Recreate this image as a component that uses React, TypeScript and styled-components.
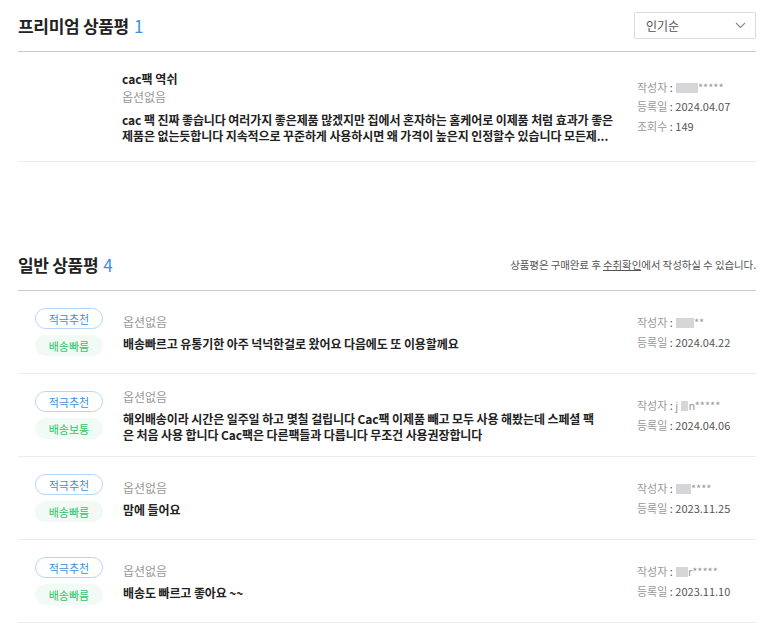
import React from "react";
import styled, { createGlobalStyle } from "styled-components";

const Global = createGlobalStyle`
  html, body { margin: 0; padding: 0; background: #fff; }
  body { font-family: "Noto Sans CJK KR", "Noto Sans", sans-serif; color: #222; }
  * { box-sizing: border-box; }
`;

const Page = styled.div`
  width: 773px;
  padding: 0 17px 0 18px;
`;

const SectionHead = styled.div`
  display: flex;
  align-items: center;
  justify-content: space-between;
  height: 52px;
  border-bottom: 1px solid #c9c9cf;
`;

const Title = styled.h2`
  margin: 0;
  font-size: 17px;
  font-weight: 700;
  color: #222;
  letter-spacing: -0.3px;
  span { color: #3d8fe0; font-weight: 400; margin-left: 5px; }
`;

const SelectBox = styled.div`
  width: 122px;
  height: 27px;
  border: 1px solid #dcdcdc;
  border-radius: 2px;
  display: flex;
  align-items: center;
  justify-content: space-between;
  padding: 0 9px 0 11px;
  font-size: 12px;
  color: #555;
`;

const Note = styled.div`
  font-size: 10.5px;
  color: #555;
  letter-spacing: -0.1px;
  a { color: #555; text-decoration: underline; }
`;

const PremiumItem = styled.div`
  display: flex;
  align-items: center;
  height: 110px;
  border-bottom: 1px solid #ececec;
`;

const Thumb = styled.div`
  width: 104px;
  flex-shrink: 0;
`;

const Body = styled.div`
  flex: 1;
  min-width: 0;
  display: flex;
  flex-direction: column;
`;

const ItemTitle = styled.div`
  font-size: 12px;
  font-weight: 600;
  line-height: 18px;
  color: #222;
`;

const Option = styled.div`
  font-size: 12px;
  line-height: 18px;
  color: #999;
`;

const Text = styled.div<{ $mt: number }>`
  font-size: 12px;
  font-weight: 600;
  line-height: 16px;
  color: #222;
  margin-top: ${(p) => p.$mt}px;
  letter-spacing: -0.1px;
`;

const Meta = styled.div`
  width: 119px;
  flex-shrink: 0;
  display: flex;
  flex-direction: column;
  gap: 3px;
  font-size: 11px;
  line-height: 16.5px;
  color: #999;
  margin-left: 22px;
  b { font-weight: 400; color: #555; }
`;

const Blur = styled.i<{ $w: number }>`
  display: inline-block;
  width: ${(p) => p.$w}px;
  height: 10px;
  background: #d6d6d8;
  vertical-align: -1px;
  margin-left: 3px;
`;

const Row = styled.div`
  display: flex;
  align-items: center;
  height: 83px;
  padding-left: 17px;
  border-bottom: 1px solid #ececec;
`;

const Badges = styled.div`
  width: 68px;
  flex-shrink: 0;
  margin-right: 20px;
  display: flex;
  flex-direction: column;
  gap: 6px;
`;

const Badge = styled.div<{ $kind: "blue" | "green" }>`
  height: 21px;
  border-radius: 11px;
  display: flex;
  align-items: center;
  justify-content: center;
  font-size: 11px;
  ${(p) =>
    p.$kind === "blue"
      ? `border: 1px solid #b6d6f5; color: #3d8fe0; background: #fff;`
      : `background: #f1faf4; color: #2fc46b;`}
`;

const Spacer = styled.div`
  height: 77px;
`;

const Chevron = () => (
  <svg width="11" height="7" viewBox="0 0 11 7" fill="none">
    <path d="M1 1l4.5 4.5L10 1" stroke="#888" strokeWidth="1.1" />
  </svg>
);

type Review = {
  badge2: string;
  lines: string[];
  user: React.ReactNode;
  date: string;
};

const reviews: Review[] = [
  {
    badge2: "배송빠름",
    lines: ["배송빠르고 유통기한 아주 넉넉한걸로 왔어요 다음에도 또 이용할께요"],
    user: (
      <>
        <Blur $w={18} />**
      </>
    ),
    date: "2024.04.22",
  },
  {
    badge2: "배송보통",
    lines: [
      "해외배송이라 시간은 일주일 하고 몇칠 걸립니다 Cac팩 이제품 빼고 모두 사용 해봤는데 스페셜 팩",
      "은 처음 사용 합니다 Cac팩은 다른팩들과 다릅니다 무조건 사용권장합니다",
    ],
    user: (
      <>
        {" "}j<Blur $w={7} />n*****
      </>
    ),
    date: "2024.04.06",
  },
  {
    badge2: "배송빠름",
    lines: ["맘에 들어요"],
    user: (
      <>
        <Blur $w={15} />****
      </>
    ),
    date: "2023.11.25",
  },
  {
    badge2: "배송빠름",
    lines: ["배송도 빠르고 좋아요 ~~"],
    user: (
      <>
        <Blur $w={12} />r*****
      </>
    ),
    date: "2023.11.10",
  },
];

export default function App() {
  return (
    <Page>
      <Global />
      <SectionHead>
        <Title>
          프리미엄 상품평<span>1</span>
        </Title>
        <SelectBox>
          인기순
          <Chevron />
        </SelectBox>
      </SectionHead>
      <PremiumItem>
        <Thumb />
        <Body>
          <ItemTitle>cac팩 역쉬</ItemTitle>
          <Option>옵션없음</Option>
          <Text $mt={6}>
            cac 팩 진짜 좋습니다 여러가지 좋은제품 많겠지만 집에서 혼자하는 홈케어로 이제품 처럼 효과가 좋은
            <br />
            제품은 없는듯합니다 지속적으로 꾸준하게 사용하시면 왜 가격이 높은지 인정할수 있습니다 모든제...
          </Text>
        </Body>
        <Meta>
          <div>
            작성자 <b>:</b>
            <Blur $w={22} />
            *****
          </div>
          <div>
            등록일 <b>: 2024.04.07</b>
          </div>
          <div>
            조회수 <b>: 149</b>
          </div>
        </Meta>
      </PremiumItem>
      <Spacer />
      <SectionHead>
        <Title>
          일반 상품평<span>4</span>
        </Title>
        <Note>
          상품평은 구매완료 후 <a>수취확인</a>에서 작성하실 수 있습니다.
        </Note>
      </SectionHead>
      {reviews.map((r, i) => (
        <Row key={i}>
          <Badges>
            <Badge $kind="blue">적극추천</Badge>
            <Badge $kind="green">{r.badge2}</Badge>
          </Badges>
          <Body>
            <Option>옵션없음</Option>
            <Text $mt={5}>
              {r.lines.map((l, j) => (
                <div key={j}>{l}</div>
              ))}
            </Text>
          </Body>
          <Meta>
            <div>
              작성자 <b>:</b>
              {r.user}
            </div>
            <div>
              등록일 <b>: {r.date}</b>
            </div>
          </Meta>
        </Row>
      ))}
    </Page>
  );
}
